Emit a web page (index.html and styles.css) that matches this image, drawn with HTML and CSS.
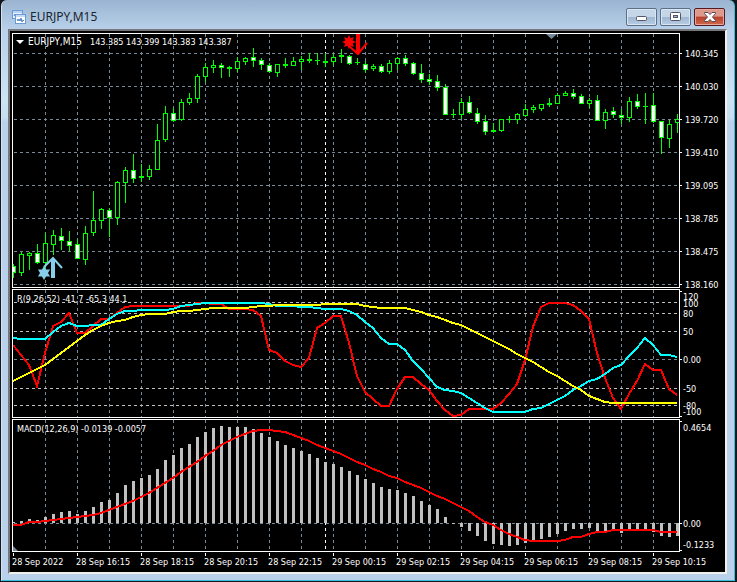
FILE: index.html
```
<!DOCTYPE html>
<html lang="en">
<head>
	<meta charset="UTF-8">
	<title>EURJPY,M15</title>
	<link rel="stylesheet" href="styles.css">
</head>
<body>
	<div class="window">
		<header class="titlebar">
			<svg class="app-icon" width="14" height="14" viewBox="0 0 14 14">
				<rect x="0.5" y="0.5" width="10" height="8" fill="#e8f2fc" stroke="#6a9bd8"/>
				<path d="M1 2h9" stroke="#8ab4e6" stroke-width="1"/>
				<path d="M2 6l1-2 1 3 1-3" fill="none" stroke="#4a80c8"/>
				<rect x="3.5" y="4.5" width="10" height="9" fill="#fff" stroke="#6a9bd8"/>
				<path d="M4 6h9" stroke="#8ab4e6" stroke-width="1"/>
				<path d="M5 9l1 2 1-2 1 2 1-3 1 4 1-2 1 1" fill="none" stroke="#4a80c8"/>
			</svg>
			<h1 class="title">EURJPY,M15</h1>
			<button class="btn" type="button" aria-label="Minimize">
				<svg width="12" height="10" viewBox="0 0 12 10">
					<rect x="0.5" y="4.5" width="10" height="4" rx="1" fill="#fff" stroke="#535666"/>
				</svg>
			</button>
			<button class="btn" type="button" aria-label="Maximize">
				<svg width="12" height="10" viewBox="0 0 12 10">
					<rect x="0.5" y="0.5" width="10" height="8" rx="1" fill="#fff" stroke="#535666"/>
					<rect x="3.5" y="3.5" width="4" height="2" fill="#9db5d0" stroke="#535666"/>
				</svg>
			</button>
			<button class="btn close" type="button" aria-label="Close">
				<svg width="12" height="10" viewBox="0 0 12 10">
					<path d="M0.5 0.5h3.5l2 2 2-2h3.5v1l-3 3.500 3 3.500v1h-3.500l-2-2-2 2h-3.500v-1l3-3.500-3-3.500z" fill="#fff" stroke="#5b4a55"/>
				</svg>
			</button>
		</header>

		<main class="chart">
			<section class="panel">
				<svg id="pricePlot" class="plot price" viewBox="12 33 668 255" preserveAspectRatio="none"></svg>
				<svg id="priceAxis" class="axis price" viewBox="680 33 45 255"></svg>
			</section>
			<section class="panel">
				<svg id="rPlot" class="plot percent" viewBox="12 289 668 129" preserveAspectRatio="none"></svg>
				<svg id="rAxis" class="axis percent" viewBox="680 289 45 129"></svg>
			</section>
			<section class="panel">
				<svg id="macdPlot" class="plot macd" viewBox="12 419 668 133" preserveAspectRatio="none"></svg>
				<svg id="macdAxis" class="axis macd" viewBox="680 419 45 133"></svg>
			</section>
			<ol class="times">
				<li>28 Sep 2022</li>
				<li>28 Sep 16:15</li>
				<li>28 Sep 18:15</li>
				<li>28 Sep 20:15</li>
				<li>28 Sep 22:15</li>
				<li>29 Sep 00:15</li>
				<li>29 Sep 02:15</li>
				<li>29 Sep 04:15</li>
				<li>29 Sep 06:15</li>
				<li>29 Sep 08:15</li>
				<li>29 Sep 10:15</li>
			</ol>
		</main>
	</div>

	<script src="script.js"></script>
</body>
</html>
```

FILE: styles.css
```
* { box-sizing: border-box; }

body {
	margin: 0;
	background: #14181c;
	font-family: "DejaVu Sans Condensed", "DejaVu Sans", sans-serif;
	font-size: 9px;
}

.window {
	margin: 0 2px 1px 1px;
	padding: 0 7px 6px 6px;
	border: 1px solid #35c0dc;
	border-width: 0 1px 1px 1px;
	border-left-color: #d4e4f4;
	border-radius: 6px 6px 0 0;
	background: linear-gradient(#9ab4d1, #b9d1ea 30px, #cbe3f3 100px, #c5def1 118px, #b9d1ea 122px);
}

.titlebar {
	display: flex;
	align-items: center;
	height: 29px;
	padding: 4px 2px 0 4px;
	gap: 3px;
}
.app-icon { flex: none; }
.title {
	flex: 1;
	margin: 0;
	padding-left: 1px;
	font: 12px "Noto Sans", "Open Sans", sans-serif;
	color: #1b2530;
}

.btn {
	display: flex;
	align-items: center;
	justify-content: center;
	width: 31px;
	height: 18px;
	padding: 0;
	border: 1px solid #5d6f86;
	border-radius: 2px;
	background: linear-gradient(#c5d6e8 50%, #9fb6d0 50%, #b8cde4);
	box-shadow: inset 0 0 0 1px #d9e6f3;
}
.btn.close {
	border-color: #571a20;
	background: linear-gradient(#dd9a8c 45%, #b8402c 50%, #cf6a4c);
	box-shadow: inset 0 0 0 1px #e5a79b;
}

.chart {
	padding: 2px 0 0 2px;
	border: 2px solid #77777a;
	border-right-color: #f0f0ee;
	border-bottom-color: #f0f0ee;
	background: #000;
	color: #fff;
}

.panel {
	display: flex;
	margin-bottom: 1px;
}
.plot {
	flex: 1;
	min-width: 0;
	border: 0;
}
.axis {
	flex: none;
	width: 45px;
	overflow: visible;
}
.price { height: 255px; }
.percent { height: 129px; }
.macd { height: 133px; }

svg text { fill: #fff; white-space: pre; }
svg .symbol { font-size: 10px; }
.frame, .grid, .level, .day, .tick, .signal { fill: none; shape-rendering: crispEdges; }
.wick, .up, .down, .bar { shape-rendering: crispEdges; }
.frame, .tick { stroke: #fff; }
.grid { stroke: #778899; stroke-dasharray: 3 3; }
.level { stroke: #c0c0c0; stroke-dasharray: 3 3; }
.day { stroke: #fff; stroke-dasharray: 3 3; }
.wick { fill: #00ff00; }
.up { fill: #000; stroke: #00ff00; }
.down { fill: #fff; stroke: #00ff00; }
.bar { fill: #c0c0c0; }
.signal { stroke-width: 2; }
.red { stroke: #ff0000; }
.cyan { stroke: #00ffff; }
.yellow { stroke: #ffff00; }
.marker { fill: #778899; }
.buy { fill: #87ceeb; }
.sell { fill: #ff0000; }
.buy-arrow, .sell-arrow { fill: none; stroke-width: 2; }
.buy-arrow { stroke: #87ceeb; }
.sell-arrow { stroke: #ff0000; }
.shaft { stroke-width: 4; }

.times {
	display: grid;
	grid-template-columns: repeat(11, 1fr);
	height: 19px;
	margin: 0;
	padding: 0 9px 0 0;
	list-style: none;
	line-height: 18px;
	white-space: nowrap;
}
.times li {
	background: linear-gradient(#fff, #fff) 1px 0 / 1px 3px no-repeat;
}
```

FILE: script.js
```
const NS = "http://www.w3.org/2000/svg";
const LEFT = 12, RIGHT = 679, STEP = 8;

// high, body top, body bottom, low, type (u: up, d: down, x: doji)
const candles = `264 266 273 278 d|252 254 273 276 u|252 253 256 270 u|244 253 263 264 d|233 243 263 268 u|230 235 245 255 u
228 236 241 250 d|231 241 246 251 d|239 244 259 259 d|226 233 260 265 u|191 220 233 236 u|208 209 221 229 u|208 210 218 237 d
181 182 218 225 u|167 170 183 203 u|154 170 179 183 d|164 176 178 182 x|165 169 177 180 u|124 140 170 170 u|106 113 140 142 u
108 113 121 122 d|99 102 120 121 u|93 98 103 105 u|74 76 99 103 u|63 67 77 82 u|60 65 68 73 u|63 65 68 78 d|66 67 69 77 x
57 61 69 72 u|57 58 62 65 u|48 57 61 67 d|58 60 65 70 d|63 65 72 73 d|64 64 73 77 u|58 64 66 68 x|57 61 66 66 u|56 59 62 70 u
53 59 61 63 x|53 60 61 65 x|53 61 63 67 x|54 57 62 65 u|49 55 57 63 x|55 56 64 65 d|58 62 63 65 x|61 64 70 73 d|64 66 69 71 u
64 66 72 73 d|60 63 72 74 u|57 58 64 70 u|55 58 64 66 d|62 63 74 75 d|64 73 80 83 d|74 79 82 85 d|75 81 88 91 d|84 87 115 115 d
109 114 115 118 x|98 102 115 119 u|96 102 113 114 d|108 113 122 124 d|115 121 132 135 d|123 130 132 132 x|119 119 131 132 u
116 119 120 123 x|113 114 120 124 u|104 109 116 117 u|105 107 110 113 u|104 104 109 111 u|98 103 105 107 x|93 95 104 104 u
91 93 96 96 u|89 93 97 99 d|94 96 104 104 d|98 100 104 108 u|95 100 121 121 d|109 112 121 129 u|107 111 115 118 d
109 115 118 124 d|97 101 118 122 u|94 101 107 109 d|93 106 107 124 x|93 105 122 123 d|121 121 138 154 d|120 124 139 148 u
114 119 123 133 u`.split(/[|\n]/).map(s => s.split(" "));

const fast = [345,355,365,386,353,326,322,313,333,333,326,319,319,313,307,306,306,306,306,306,306,306,306,303,303,304,304,309,309,309,310,316,
	350,353,361,365,367,358,328,323,316,316,343,376,392,399,406,406,389,377,377,384,390,401,410,416,415,409,409,409,409,403,394,384,
	360,327,307,303,303,303,305,311,319,353,378,398,409,394,381,364,370,370,389,395];
const medium = [338,339,339,339,339,332,326,323,326,326,325,325,319,314,311,311,310,310,310,310,309,306,305,304,303,303,303,303,303,303,303,303,
	304,306,306,306,307,307,308,309,309,309,311,315,322,328,338,344,344,350,361,369,378,387,390,391,393,398,403,408,412,412,412,412,
	412,409,408,404,400,396,390,386,381,379,374,368,365,356,348,338,345,355,355,357];
const slow = [381,377,373,369,365,359,353,347,341,335,330,326,323,321,320,317,315,314,314,314,312,311,311,310,309,308,308,308,308,308,307,306,
	306,305,305,305,305,305,305,304,304,304,304,304,306,307,308,308,308,308,310,312,315,317,320,323,325,329,333,337,341,345,349,354,
	358,362,367,372,376,381,386,390,396,399,402,403,403,403,403,403,403,403,403,403];
const macd = [522,521,519,520,517,514,512,511,514,511,507,502,500,493,485,481,478,475,469,460,455,448,444,437,432,428,426,427,427,427,429,433,
	437,441,445,448,451,454,458,462,464,467,471,475,479,483,487,489,490,493,496,501,505,509,517,524,527,531,536,541,544,545,546,545,
	543,541,539,537,534,531,529,529,528,531,532,531,533,530,529,529,532,536,537,536];
const signal = [525,525,522,522,521,520,519,518,517,516,515,513,510,507,504,501,497,493,488,483,478,472,467,462,456,451,445,441,437,434,431,430,
	430,431,432,435,438,441,445,448,451,454,458,462,465,469,472,476,478,482,485,488,492,496,499,503,507,511,517,522,525,530,534,537,
	540,541,541,541,541,540,537,537,534,532,532,530,530,530,530,530,530,532,532,532];

function add(parent, tag, attrs, text) {
	const el = document.createElementNS(NS, tag);
	for (const key in attrs) el.setAttribute(key, attrs[key]);
	if (text) el.textContent = text;
	parent.appendChild(el);
	return el;
}

function hline(svg, y, cls) {
	add(svg, "path", { d: `M${LEFT + 2} ${y + 0.5}H${RIGHT}`, class: cls });
}

function verticals(svg, top, bottom) {
	for (let x = 45; x < RIGHT; x += 32) {
		add(svg, "path", { d: `M${x + 0.5} ${top}V${bottom}`, class: "grid" });
	}
	add(svg, "path", { d: `M325.5 ${top}V${bottom}`, class: "day" });
}

function frame(svg, top, bottom) {
	add(svg, "rect", { x: LEFT + 0.5, y: top + 0.5, width: RIGHT - LEFT, height: bottom - top, class: "frame" });
}

function curve(svg, values, cls) {
	const points = values.map((y, i) => `${13 + i * STEP},${y}`).join(" ");
	add(svg, "polyline", { points, class: "signal " + cls });
}

function star(svg, cx, cy, spikes, outer, inner, cls) {
	const points = [];
	for (let i = 0; i < spikes * 2; i++) {
		const r = i % 2 ? inner : outer;
		const a = Math.PI * i / spikes;
		points.push(`${cx + r * Math.sin(a)},${cy - r * Math.cos(a)}`);
	}
	add(svg, "polygon", { points: points.join(" "), class: cls });
}

function label(svg, x, y, text, cls = "label") {
	add(svg, "text", { x, y: y + 4, class: cls }, text);
}

function tick(svg, y) {
	add(svg, "path", { d: `M680 ${y + 0.5}h2`, class: "tick" });
}

// price
const price = document.getElementById("pricePlot");
const priceAxis = document.getElementById("priceAxis");
verticals(price, 34, 287);
["140.345", "140.030", "139.720", "139.410", "139.095", "138.785", "138.475", "138.160"].forEach((text, i) => {
	const y = 53 + i * 33;
	hline(price, y, "grid");
	tick(priceAxis, y);
	label(priceAxis, 685, y, text);
});
candles.forEach(([high, top, bottom, low, type], i) => {
	const x = 13 + i * STEP;
	add(price, "rect", { x, y: high, width: 1, height: low - high, class: "wick" });
	if (type == "x") {
		add(price, "rect", { x: x - 2, y: top, width: 5, height: bottom - top, class: "wick" });
	} else {
		add(price, "rect", { x: x - 1.5, y: +top + 0.5, width: 4, height: bottom - top - 1, class: type == "u" ? "up" : "down" });
	}
});
add(price, "path", { d: "M53 278V259", class: "buy-arrow shaft" });
add(price, "path", { d: "M44 267L53 258L62 268", class: "buy-arrow" });
star(price, 44, 273, 6, 7, 4, "buy");
add(price, "path", { d: "M358 34V53", class: "sell-arrow shaft" });
add(price, "path", { d: "M349 46L358 54L367 43", class: "sell-arrow" });
star(price, 349, 42, 8, 7, 4, "sell");
add(price, "path", { d: "M546 34h11l-5.500 5z", class: "marker" });
frame(price, 33, 287);
add(price, "path", { d: "M16 40h8l-4 4z", fill: "#fff" });
label(price, 28, 41, "EURJPY,M15", "symbol");
label(price, 90, 41, "143.385 143.399 143.383 143.387");

// percent range
const range = document.getElementById("rPlot");
const rangeAxis = document.getElementById("rAxis");
verticals(range, 290, 417);
[302, 313, 331, 388, 405].forEach(y => hline(range, y, "level"));
hline(range, 359, "grid");
curve(range, fast, "red");
curve(range, medium, "cyan");
curve(range, slow, "yellow");
frame(range, 289, 417);
label(range, 17, 298, "R(9,26,52) -41.7 -65.3 44.1");
[[296, "120"], [303, "100"], [313, "80"], [331, "50"], [359, "0.00"], [388, "-50"], [405, "-80"], [411, "-100"]]
	.forEach(([y, text]) => label(rangeAxis, 683, y, text));
[291, 359, 416].forEach(y => tick(rangeAxis, y));

// macd
const hist = document.getElementById("macdPlot");
const histAxis = document.getElementById("macdAxis");
verticals(hist, 420, 551);
hline(hist, 523, "grid");
macd.forEach((y, i) => {
	add(hist, "rect", { x: 12 + i * STEP, y: Math.min(y, 523), width: 3, height: Math.abs(523 - y), class: "bar" });
});
curve(hist, signal, "red");
add(hist, "path", { d: "M13 546v5h5z", class: "marker" });
frame(hist, 419, 551);
label(hist, 17, 428, "MACD(12,26,9) -0.0139 -0.0057");
[[427, "0.4654"], [523, "0.00"], [544, "-0.1233"]].forEach(([y, text]) => label(histAxis, 683, y, text));
[421, 523, 550].forEach(y => tick(histAxis, y));
```
